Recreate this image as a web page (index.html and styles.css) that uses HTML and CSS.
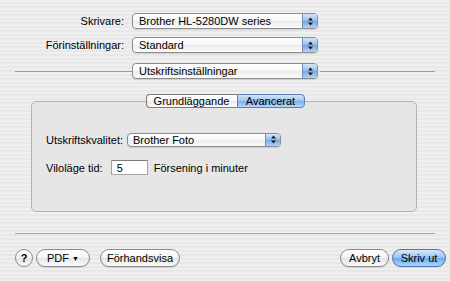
FILE: index.html
```html
<!DOCTYPE html>
<html lang="sv">
<head>
    <meta charset="UTF-8">
    <title>Skriv ut</title>
    <link rel="stylesheet" href="styles.css">
</head>
<body>

<div class="dialog">
    <div class="row first">
        <span class="label">Skrivare:</span>
        <div class="popup main">
            <span class="popup-text">Brother HL-5280DW series</span>
            <span class="stepper"><svg width="7" height="9" viewBox="0 0 7 9"><path d="M3.5 0.5 L6 3.5 L1 3.5 Z M1 5.5 L6 5.5 L3.5 8.5 Z" fill="#1a1a1a"/></svg></span>
        </div>
    </div>
    <div class="row">
        <span class="label">Förinställningar:</span>
        <div class="popup main">
            <span class="popup-text">Standard</span>
            <span class="stepper"><svg width="7" height="9" viewBox="0 0 7 9"><path d="M3.5 0.5 L6 3.5 L1 3.5 Z M1 5.5 L6 5.5 L3.5 8.5 Z" fill="#1a1a1a"/></svg></span>
        </div>
    </div>
    <div class="row third">
        <span class="rule left"></span>
        <div class="popup main">
            <span class="popup-text">Utskriftsinställningar</span>
            <span class="stepper"><svg width="7" height="9" viewBox="0 0 7 9"><path d="M3.5 0.5 L6 3.5 L1 3.5 Z M1 5.5 L6 5.5 L3.5 8.5 Z" fill="#1a1a1a"/></svg></span>
        </div>
        <span class="rule right"></span>
    </div>

    <div class="tabs">
        <span class="tab">Grundläggande</span>
        <span class="tab active">Avancerat</span>
    </div>
    <div class="pane">
        <div class="pane-row">
            <span>Utskriftskvalitet:</span>
            <div class="popup quality">
                <span class="popup-text">Brother Foto</span>
                <span class="stepper"><svg width="7" height="9" viewBox="0 0 7 9"><path d="M3.5 0.5 L6 3.5 L1 3.5 Z M1 5.5 L6 5.5 L3.5 8.5 Z" fill="#1a1a1a"/></svg></span>
            </div>
        </div>
        <div class="pane-row sleep">
            <span>Viloläge tid:</span>
            <span class="field">5</span>
            <span>Försening i minuter</span>
        </div>
    </div>

    <div class="separator"></div>

    <div class="buttons">
        <span class="help">?</span>
        <span class="btn pdf">PDF <span class="arrow">▼</span></span>
        <span class="btn preview">Förhandsvisa</span>
        <span class="spacer"></span>
        <span class="btn cancel">Avbryt</span>
        <span class="btn print">Skriv ut</span>
    </div>
</div>

</body>
</html>
```

FILE: styles.css
```css
body {
    margin: 0;
    width: 450px;
    height: 281px;
    overflow: hidden;
    font-family: 'Liberation Sans', Arial, sans-serif;
    font-size: 11px;
    color: #000;
    background: repeating-linear-gradient(180deg, #efefef 0 2px, #e8e8e8 2px 4px);
}

.dialog { padding: 13px 15px 0 15px; }

.row {
    display: flex;
    align-items: center;
    height: 16px;
    margin-top: 8px;
}
.row.first { margin-top: 0; }
.row.third { margin-top: 10px; }

.label {
    width: 109px;
    margin-right: 8px;
    text-align: right;
}

.rule { height: 1px; background: #9a9a9a; }
.rule.left { width: 117px; }
.rule.right { flex: 1; margin-left: 2px; }

/* aqua popup menu */
.popup {
    display: flex;
    align-items: stretch;
    box-sizing: border-box;
    height: 16px;
    border: 1px solid #8c8c8c;
    border-radius: 4px;
    overflow: hidden;
    background: linear-gradient(180deg, #ffffff 0%, #f6f6f6 50%, #ececec 51%, #fbfbfb 100%);
    box-shadow: 0 1px 1px rgba(0,0,0,0.12);
}
.popup.main { width: 186px; }
.popup.quality { width: 154px; height: 14px; margin-left: 4px; }

.popup-text {
    flex: 1;
    padding-left: 6px;
    line-height: 14px;
    white-space: nowrap;
}
.popup.quality .popup-text { line-height: 12px; padding-left: 5px; }

.stepper {
    width: 14px;
    display: flex;
    align-items: center;
    justify-content: center;
    border-left: 1px solid #6f8fba;
    background: linear-gradient(180deg, #d4e5f8 0%, #9cc1ee 45%, #78a8e6 52%, #b2d3f6 100%);
}

/* tab control */
.tabs {
    display: flex;
    justify-content: center;
    margin-top: 15px;
    margin-bottom: -7px;
    position: relative;
    z-index: 1;
}

.tab {
    box-sizing: border-box;
    height: 14px;
    line-height: 12px;
    text-align: center;
    border: 1px solid #7c7c7c;
    background: linear-gradient(180deg, #ffffff 0%, #f6f6f6 50%, #ebebeb 51%, #fafafa 100%);
}
.tab:first-child { width: 91px; border-radius: 4px 0 0 4px; border-right: none; }
.tab.active {
    width: 68px;
    border-radius: 0 4px 4px 0;
    border-color: #5b7fb0;
    background: linear-gradient(180deg, #d3e5f9 0%, #9fc4ef 48%, #7badeb 52%, #b8d8f8 100%);
}

.pane {
    box-sizing: border-box;
    margin: 0 18px 0 16px;
    height: 111px;
    padding: 30px 0 0 14px;
    border: 1px solid #b3b3b3;
    border-radius: 5px;
    background: #e6e6e6;
}

.pane-row {
    display: flex;
    align-items: center;
    height: 15px;
}

.pane-row.sleep { margin-top: 13px; }

.field {
    box-sizing: border-box;
    width: 37px;
    height: 15px;
    margin: 0 6px 0 8px;
    padding-left: 5px;
    line-height: 14px;
    background: #fff;
    border: 1px solid #a5a5a5;
    border-top-color: #7d7d7d;
}

.separator {
    height: 1px;
    margin-top: 21px;
    background: #a8a8a8;
}

/* bottom buttons */
.buttons {
    display: flex;
    align-items: center;
    margin-top: 15px;
    margin-right: -11px;
}

.help {
    box-sizing: border-box;
    width: 18px;
    height: 18px;
    border-radius: 50%;
    border: 1px solid #8a8a8a;
    text-align: center;
    line-height: 16px;
    font-weight: bold;
    font-size: 11px;
    background: linear-gradient(180deg, #ffffff 0%, #f3f3f3 50%, #e3e3e3 51%, #fafafa 100%);
}

.btn {
    box-sizing: border-box;
    height: 18px;
    line-height: 16px;
    text-align: center;
    border: 1px solid #8a8a8a;
    border-radius: 9px;
    background: linear-gradient(180deg, #ffffff 0%, #f4f4f4 50%, #e4e4e4 51%, #fbfbfb 100%);
    box-shadow: 0 1px 1px rgba(0,0,0,0.1);
}

.btn.pdf { width: 54px; margin-left: 3px; }
.btn.preview { width: 80px; margin-left: 10px; }
.btn.cancel { width: 49px; }
.btn.print {
    width: 54px;
    margin-left: 3px;
    border-color: #4c76ae;
    background: linear-gradient(180deg, #d5e8fb 0%, #98c4f2 48%, #6fa9ee 52%, #acd6fb 100%);
}

.arrow { font-size: 7px; vertical-align: 1px; }

.spacer { flex: 1; }
```
